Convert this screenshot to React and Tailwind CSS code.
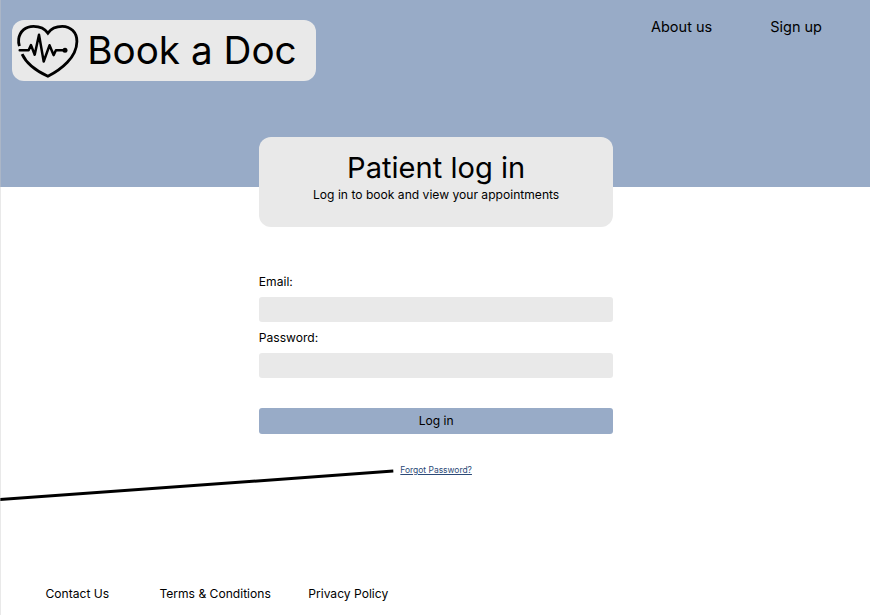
function HeartPulse() {
  return (
    <svg
      className="h-[56px] w-[64px] shrink-0"
      viewBox="15.7 22.1 64 56"
      fill="none"
      stroke="#000"
      strokeLinecap="round"
      strokeLinejoin="round"
    >
      <path
        strokeWidth="2.8"
        strokeLinecap="butt"
        strokeLinejoin="miter"
        d="M19.1 46.2C18.2 43.5 18.1 41.5 18.4 39C19.6 31 25.5 26.4 33.2 26.4C39.5 26.4 44.5 28.6 47.6 33.2C50.7 28.6 55.7 26.4 62 26.4C70.5 26.4 76.7 32.8 76.6 41.5C76.4 57.5 61 69.5 47.6 76.4C37 71.5 26.5 64.5 21.8 54.2"
      />
      <path
        strokeWidth="2.5"
        d="M19.4 50.4H28.3L30.7 45.2L34.4 54.8L38.7 34.8L43.4 61.6L49.2 45.4L53.3 55.2L55.6 50.4H63"
      />
      <circle cx="64.7" cy="50.4" r="2.5" fill="#000" stroke="none" />
    </svg>
  );
}

function Field({ label, type, className }) {
  return (
    <label className={`flex flex-col ${className}`}>
      <span className="text-[12.1px] leading-[16px]">{label}</span>
      <input
        type={type}
        className="mt-[7px] h-[25.4px] w-full rounded-[3px] bg-[#e9e9e9] px-2 outline-none"
      />
    </label>
  );
}

export default function App() {
  return (
    <div className="relative flex h-[615px] w-[870px] flex-col overflow-hidden bg-white font-['Inter',sans-serif] text-black">
      <header className="flex h-[187px] shrink-0 items-start justify-between bg-[#98abc7] pl-[12px] pr-[48px]">
        <div className="mt-[20px] flex h-[60.7px] w-[304.3px] items-center rounded-[12px] bg-[#e9e9e9] pl-[3.5px]">
          <HeartPulse />
          <h1 className="ml-[7.7px] whitespace-nowrap text-[38.66px] leading-[47px]">Book a Doc</h1>
        </div>
        <nav className="mt-[17px] flex gap-[58px] whitespace-nowrap text-[14.5px] leading-[19px]">
          <a href="#about">About us</a>
          <a href="#signup">Sign up</a>
        </nav>
      </header>

      <main className="relative mt-[-50px] ml-[258.8px] flex w-[354.7px] flex-col">
        <section className="flex h-[90px] flex-col items-center rounded-[12px] bg-[#e9e9e9] pt-[13px]">
          <h2 className="whitespace-nowrap text-[29.1px] leading-[35px]">Patient log in</h2>
          <p className="mt-[2px] whitespace-nowrap text-[12.1px] leading-[16px]">Log in to book and view your appointments</p>
        </section>
        <form className="flex flex-col">
          <Field label="Email:" type="email" className="mt-[46.8px]" />
          <Field label="Password:" type="password" className="mt-[7.4px]" />
          <button type="button" className="mt-[30.2px] h-[25.4px] rounded-[3px] bg-[#98abc7] text-[12.1px] leading-[16px]">
            Log in
          </button>
        </form>
        <a
          href="#forgot"
          className="mt-[31.2px] self-center text-[8.46px] leading-[11px] text-[#2c4a78] underline"
        >
          Forgot Password?
        </a>
      </main>

      <footer className="mt-auto mb-[13px] ml-[45.5px] flex gap-[50.2px] whitespace-nowrap text-[12.1px] leading-[16px]">
        <a href="#contact">Contact Us</a>
        <a href="#terms">Terms &amp; Conditions</a>
        <a href="#privacy" className="-ml-[12.8px]">Privacy Policy</a>
      </footer>

      <svg className="pointer-events-none absolute left-0 top-[465px] h-[40px] w-[400px]" viewBox="0 0 400 40">
        <path d="M-2 34.6L393.3 6.1" stroke="#000" strokeWidth="3" />
      </svg>
      <div className="pointer-events-none absolute inset-y-0 left-0 w-px bg-[#c8c8c8]/40" />
    </div>
  );
}
